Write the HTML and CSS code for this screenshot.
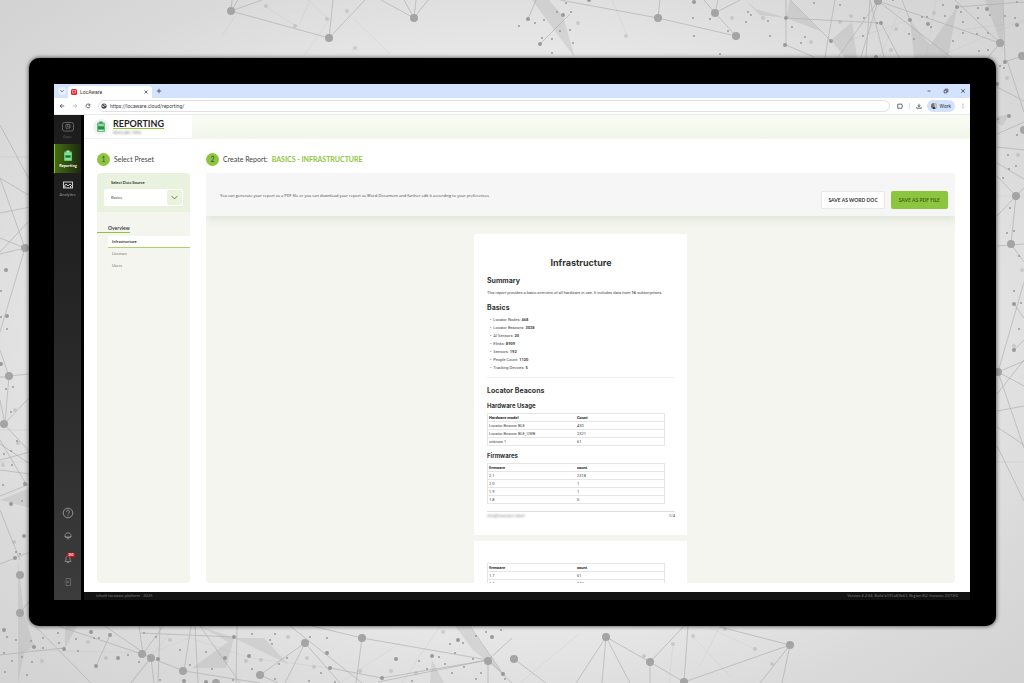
FILE: index.html
```html
<!DOCTYPE html>
<html lang="en">
<head>
    <meta charset="utf-8">
    <meta name="viewport" content="width=device-width, initial-scale=1.0">
    <title>LocAware - Reporting</title>
    <link rel="stylesheet" href="styles.css">
</head>

<body>

<!-- network pattern behind the monitor -->
<svg class="network" viewBox="0 0 1024 683" preserveAspectRatio="xMidYMid slice" aria-hidden="true">
    <g class="shapes">
        <path d="M532 0l43 58-12-42-14-16zM745 0l15 15 26 3-30-9zM790 0l-4 18 34 13zM831 40l21-18 5 36h-12zM910 20l4 38h34l9-51-27 38zM985 0h18v50z"/>
        <path d="M18 560v123l6-30 10-8-10-30zM200 626l34 12-8 30h-34l36-26zM234 638l30 0 24 26zM455 626l14 0 34 48-30-24zM432 660l-2 23h14zM65 626h12l-12 22zM0 500l30-12v20zM990 118l20-4-8 12z"/>
    </g>
    <g class="lines faint">
        <path d="M222 36l13-20M266 7l32 20 12-27M304 55l26-36M355 20l35 34M308 0l20 19M612 0l15 35M520 683l60-50M720 626l-20 40M673 645l-4 38M693 637l38 40M755 649l-45-21M0 157h30M0 430h30M0 462h30M997 196h27M997 462h27M20 650l130 3 40-15 60 20 80 10M130 683l40-50M340 683l60-40M440 626l-38 57"/>
        <path d="M900 10l-20 46M936 0l-10 57M960 30l64-8M940 56l84-36M850 40l60-20"/>
    </g>
    <g class="lines">
        <path d="M231 11l98 27 36-38M329 38l4-38M232 0l-1 11L262 0M238 0l-7 11M381 0l33 18L404 0M416 0l-2 18L428 0"/>
        <path d="M560 0l98 18 78 18-21-23L704 0M658 18l2-18M718 0l-3 13L740 0M786 0v45l28 12M786 18l95 5M790 0l41 41M835 0l-10 57M878 1l-40 56M870 0l-4 57M878 1l-17 56M870 0l14 57M881 23l18 34M878 1l122 42L955 0M878 1l74 57M1003 0l2 60M1000 43l-14 17M1022 56l-17 6M957 7l67-5M910 20l-8-20M528 19l8-19M540 44l30-30"/>
        <path d="M0 125l30 56M0 178l30 18M0 213l30-6M0 178l25 70L0 238M25 248L0 254M30 220L0 252M25 248L0 332M0 350l9 26 21-2M9 376l-4 48M0 377h9M4 424l26-27M4 424l26 28M0 400l5 24M0 460l30-8M0 496l30-12M0 440l26 44M0 510l20 50M0 564l30-12M0 470l30 4M0 444l30 20"/>
        <path d="M1007 60l17 52M997 87l27 14M997 134l27-12M997 147l27 3M997 163l27 16M997 176l19 20-19 20M1016 196l8-8M997 246l27-2M1016 196l-5 48 13 18M1024 282l-26 90 26-11M998 372l26 14M998 372l26 76M997 394l27-34M997 411l27-5M997 427l27 18M997 446l27 55M1014 350l10-10M1014 304l10 14"/>
        <path d="M20 613L30 600M35 626l56 57M58 626l84 28 9 4 33 13 76 12M105 626l46 32M139 626l4 28 20-28M151 658l-20 25M151 658l3 25M160 626l-2 57M191 626l-7 45M195 626l3 57M140 633l94 4M200 626l40 57M237 626l-1 57M290 626l72 57M305 643l-45 32 18 8M305 643l-20 40M305 643l35 40M312 626l50 12 126 22-110 22M362 638l-6 45M330 668l52 10 106-18v23M488 660l24 23M470 626l33 48M488 660l24-22M110 635l-14 31M0 655l64-7"/>
        <path d="M514 659l32 24M606 637l44 25 34 20 106-37-70-18M606 637l-30 46M606 637l-4 46M606 637l24 46M650 662l34-36M650 662v21M684 682l4-56M790 645l-30 38M790 645l-8 38"/>
    </g>
    <path class="dots pale" d="M266 6h0M295 26h0M327 19h0M347 11h0M355 48h0M578 23h0M626 36h0M732 18h0M763 18h0M840 22h0M851 16h0M896 29h0M811 42h0M934 13h0M891 50h0M693 636h0M673 644h0M644 656h0M755 649h0M772 664h0M725 629h0M106 658h0M88 642h0M42 661h0M170 640h0M246 661h0M261 660h0M288 637h0M307 658h0M314 667h0M391 671h0M416 673h0M360 671h0M443 632h0M15 410h0M18 443h0M3 465h0M14 542h0M1007 78h0M1018 155h0M1014 346h0M1022 270h0"/>
    <path class="dots tiny" d="M519 26h0M535 23h0M544 20h0M557 12h0M571 12h0M566 3h0M542 38h0M552 39h0M570 30h0M560 31h0M573 43h0M552 53h0M693 18h0M710 19h0M728 31h0M694 36h0M720 54h0M748 12h0M751 15h0M746 22h0M768 21h0M770 36h0M792 27h0M805 37h0M801 43h0M814 3h0M840 5h0M864 18h0M863 36h0M877 23h0M893 0h0M909 34h0M914 39h0M922 17h0M927 17h0M931 27h0M943 5h0M945 16h0M961 12h0M963 22h0M963 33h0M953 41h0M978 8h0M990 15h0M978 18h0M977 34h0M988 33h0M979 51h0M988 50h0M1005 16h0M1015 18h0M1017 2h0"/>
    <path class="dots tiny" d="M7 637h0M16 640h0M31 641h0M43 638h0M43 648h0M58 633h0M59 643h0M76 639h0M94 638h0M99 638h0M78 651h0M32 662h0M12 661h0M4 653h0M22 657h0M5 672h0M27 675h0M91 631h0M128 655h0M139 662h0M144 633h0M156 637h0M180 650h0M190 665h0M206 652h0M212 669h0M160 680h0M233 680h0M252 634h0M275 634h0M270 640h0M272 644h0M287 658h0M279 664h0M252 669h0M275 679h0M310 637h0M327 638h0M309 681h0M321 673h0M335 682h0M419 661h0M427 669h0M412 681h0M439 657h0M445 664h0M452 673h0M464 667h0M473 659h0M481 673h0M476 679h0M455 653h0M450 644h0M463 643h0M476 636h0M486 632h0M501 630h0M505 679h0"/>
    <path class="dots tiny" d="M1 291h0M1 317h0M7 329h0M6 389h0M13 387h0M11 412h0M17 441h0M4 454h0M11 451h0M12 465h0M3 485h0M22 501h0M16 552h0M20 554h0M1000 66h0M1004 68h0M998 119h0M1017 135h0M1008 155h0M1016 166h0M1009 169h0M1003 178h0M1010 208h0M1007 233h0M1014 231h0M1019 256h0M1014 291h0M1021 303h0M1019 329h0"/>
    <path class="dots mid" d="M528 19h0M563 15h0M540 44h0M589 0h0M694 2h0M786 18h0M831 41h0M785 45h0M881 23h0M910 20h0M928 24h0M957 7h0M987 9h0M1017 25h0M876 57h0M6 270h0M7 316h0M1 364h0M25 484h0M11 504h0M24 536h0M15 558h0M1009 116h0M1014 304h0M1014 350h0M997 84h0M1005 62h0M4 630h0M34 647h0M64 649h0M96 666h0M118 658h0M110 635h0M91 632h0M158 659h0M184 681h0M206 682h0M234 637h0M225 658h0M249 656h0M327 653h0M330 668h0M382 678h0M396 659h0M432 656h0M458 640h0M492 637h0M503 674h0"/>
    <path class="dots big" d="M231 11h0M329 38h0M414 18h0M658 18h0M715 13h0M736 36h0M878 1h0M1000 43h0M1022 56h0M25 248h0M9 376h0M4 424h0M20 575h0M1024 130h0M1016 196h0M1011 244h0M998 372h0M20 613h0M142 654h0M151 658h0M183 671h0M216 683h0M260 675h0M305 643h0M362 638h0M488 661h0M514 659h0M606 637h0M650 662h0M684 682h0M790 645h0"/>
</svg>

<div class="monitor">
<div class="browser">

    <div class="tabstrip">
        <button class="tab-search" aria-label="Search tabs"><svg viewBox="0 0 8 8"><path d="M2 3l2 2 2-2"/></svg></button>
        <div class="tab">
            <svg class="favicon" viewBox="0 0 12 12"><rect width="12" height="12" rx="3" fill="#e8202e"/><path d="M3 3h6v4.500H6L4 9V7.500H3z" fill="none" stroke="#fff"/></svg>
            <span>LocAware</span>
            <button aria-label="Close tab"><svg viewBox="0 0 8 8"><path d="M2 2l4 4M6 2l-4 4"/></svg></button>
        </div>
        <button class="new-tab" aria-label="New tab"><svg viewBox="0 0 8 8"><path d="M4 1v6M1 4h6"/></svg></button>
        <div class="window-buttons">
            <button aria-label="Minimize"><svg viewBox="0 0 8 8"><path d="M2 4h4"/></svg></button>
            <button aria-label="Restore"><svg viewBox="0 0 8 8"><path d="M1.500 3h3.500v3.500H1.500zM3 3V1.500h3.500V5H5"/></svg></button>
            <button aria-label="Close"><svg viewBox="0 0 8 8"><path d="M1.500 1.500l5 5M6.500 1.500l-5 5"/></svg></button>
        </div>
    </div>

    <div class="toolbar">
        <button aria-label="Back"><svg viewBox="0 0 8 8"><path d="M7 4H1.500M4 1.500L1.500 4 4 6.500"/></svg></button>
        <button class="disabled" aria-label="Forward"><svg viewBox="0 0 8 8"><path d="M1 4h5.500M4 1.500L6.500 4 4 6.500"/></svg></button>
        <button aria-label="Reload"><svg viewBox="0 0 8 8"><path d="M6.200 2.500A2.600 2.600 0 1 0 6.600 4.500M6.500 1v2h-2"/></svg></button>
        <div class="address">
            <svg viewBox="0 0 8 8"><circle cx="4" cy="4" r="3.500" fill="#44474c" stroke="none"/><path d="M1.200 3.800l2 .4.8 1.500M4 1.500l.5 1.500 2 .2" stroke="#fff"/></svg>
            <input type="text" aria-label="Address" value="https://locaware.cloud/reporting/">
        </div>
        <button class="ext" aria-label="Extensions"><svg viewBox="0 0 8 8"><path d="M1 1.500h5.500v1.500c1.300 0 1.300 2 0 2V7H1z"/></svg></button>
        <span class="divider"></span>
        <button aria-label="Downloads"><svg viewBox="0 0 8 8"><path d="M4 1v4M2.200 3.300L4 5l1.800-1.700M1 5.500V7h6V5.500"/></svg></button>
        <button class="profile"><svg viewBox="0 0 8 8"><circle cx="4" cy="4" r="4" fill="#6d6f73" stroke="none"/><path d="M4 0a4 4 0 0 1 0 8z" fill="#b9c6cf" stroke="none"/><path d="M3 2h2.300v2.600L4 5.400 3 4.600z" fill="#c98a6d" stroke="none"/><path d="M2.500 5.500L4 5l1.500.5V8h-3z" fill="#2b3340" stroke="none"/></svg>Work</button>
        <button aria-label="Menu"><svg viewBox="0 0 8 8"><path d="M4 1v1M4 3.500v1M4 6v1"/></svg></button>
    </div>

    <div class="app">
        <nav class="sidebar">
            <a href="#apps" class="dim">
                <svg viewBox="0 0 24 22"><rect x="1" y="2" width="22" height="17" rx="4"/><path d="M8 6h8v7h-5l-2 2v-2H8zM11 8v3M14 8v3"/></svg>
                Apps
            </a>
            <a href="#reporting" class="active">
                <svg viewBox="0 0 24 22"><rect x="4" y="2" width="16" height="19" rx="2" fill="#5fc774" stroke="none"/><path d="M9 0h6v4H9z" fill="#b7efbf" stroke="none"/><path d="M6 7h12M6 17h12" stroke="#b7efbf"/><path d="M7 12h10" stroke="#1f6a2d" stroke-width="4"/></svg>
                Reporting
            </a>
            <a href="#analytics">
                <svg viewBox="0 0 24 22"><rect x="3" y="5" width="18" height="12"/><path d="M3 15l5-6 4 4 4-4 5 5M6 17v-4M12 17v-2M17 17v-4" /></svg>
                Analytics
            </a>
            <div class="tools">
                <button aria-label="Help"><svg viewBox="0 0 20 20"><circle cx="10" cy="10" r="8"/><path d="M7.500 8c0-3.500 5-3.300 5 0 0 2-2.500 2-2.500 4M10 13.500v1.500"/></svg></button>
                <button aria-label="Support"><svg viewBox="0 0 20 20"><path d="M4 12V9c0-7 12-7 12 0v3zM4 12h3M13 12h3M8 12v2h4v-2M10 14v3"/></svg></button>
                <button aria-label="Notifications"><svg viewBox="0 0 20 20"><path d="M4 15h12l-2-3V8c0-5-8-5-8 0v4zM8 17h4"/></svg><span class="badge">350</span></button>
                <button class="faded" aria-label="Log out"><svg viewBox="0 0 20 20"><path d="M6 7V3h9v14H6v-4M3 10h8M8 7l3 3-3 3"/></svg></button>
            </div>
        </nav>

        <div class="main">
            <header>
                <div class="brand">
                    <span class="logo"><svg viewBox="0 0 24 24"><rect x="4" y="3" width="16" height="19" rx="2" fill="#5fc27b"/><path d="M9 1h6v4H9z" fill="#358f50"/><path d="M7 8h10M7 19h10" stroke="#c9f2d2" stroke-width="2"/><rect x="6" y="11" width="12" height="5" fill="#2d8a4a"/></svg></span>
                    <div>
                        <h1>REPORTING</h1>
                        <p class="smudge">INSOLAR: 7890</p>
                    </div>
                </div>
            </header>

            <div class="columns">
                <section class="preset">
                    <h2><span class="step">1</span>Select Preset</h2>
                    <div class="panel">
                        <div class="source">
                            <label for="source">Select Data Source</label>
                            <div class="select">
                                <select id="source"><option>Basics</option></select>
                                <svg viewBox="0 0 16 16"><path d="M5 6.500l3 3 3-3"/></svg>
                            </div>
                        </div>
                        <h3>Overview</h3>
                        <ul>
                            <li><a href="#infrastructure" class="current">Infrastructure</a></li>
                            <li><a href="#licenses">Licenses</a></li>
                            <li><a href="#users">Users</a></li>
                        </ul>
                    </div>
                </section>

                <section class="create">
                    <h2><span class="step">2</span>Create Report: <b>BASICS - INFRASTRUCTURE</b></h2>
                    <div class="panel">
                        <div class="actions">
                            <p>You can generate your report as a PDF file or you can download your report as Word-Document and further edit it according to your preferences</p>
                            <button class="word">SAVE AS WORD DOC</button>
                            <button class="pdf">SAVE AS PDF FILE</button>
                        </div>
                        <div class="preview">
                            <article class="sheet">
                                <h4 class="title">Infrastructure</h4>
                                <h4>Summary</h4>
                                <p class="intro">This report provides a basic overview of all hardware in use. It includes data from <b>16</b> subscriptions.</p>
                                <h4>Basics</h4>
                                <ul>
                                    <li>Locator Nodes: <b>468</b></li>
                                    <li>Locator Beacons: <b>3028</b></li>
                                    <li>AI Sensors: <b>20</b></li>
                                    <li>Elinks: <b>8909</b></li>
                                    <li>Sensors: <b>192</b></li>
                                    <li>People Count: <b>1120</b></li>
                                    <li>Tracking Devices: <b>5</b></li>
                                </ul>
                                <hr>
                                <h4>Locator Beacons</h4>
                                <h5>Hardware Usage</h5>
                                <table>
                                    <tr><th>Hardware model</th><th>Count</th></tr>
                                    <tr><td>Locator Beacon BLE</td><td>430</td></tr>
                                    <tr><td>Locator Beacon BLE, UWB</td><td>2321</td></tr>
                                    <tr><td>unknow 1</td><td>61</td></tr>
                                </table>
                                <h5>Firmwares</h5>
                                <table>
                                    <tr><th>firmware</th><th>count</th></tr>
                                    <tr><td>2.1</td><td>2318</td></tr>
                                    <tr><td>2.0</td><td>1</td></tr>
                                    <tr><td>1.9</td><td>1</td></tr>
                                    <tr><td>1.8</td><td>5</td></tr>
                                </table>
                                <div class="sheet-footer"><span class="smudge">info@locaware.cloud</span><span>1/4</span></div>
                            </article>
                            <article class="sheet next">
                                <table>
                                    <tr><th>firmware</th><th>count</th></tr>
                                    <tr><td>1.7</td><td>61</td></tr>
                                    <tr><td>1.5</td><td>242</td></tr>
                                </table>
                            </article>
                        </div>
                    </div>
                </section>
            </div>

            <footer>
                <span>infsoft locaware.platform - 2025</span>
                <span>Version 4.2.64, Build b193a83b43, Region EU, Instance 0373f0</span>
            </footer>
        </div>
    </div>

</div>
</div>

</body>
</html>
```
FILE: styles.css
```css
* {
    box-sizing: border-box;
}

body {
    margin: 0;
    height: 100vh;
    padding: 58px 28px 57px 29px;
    font-family: Lato, "Open Sans", sans-serif;
    font-size: 4px;
    color: #444;
    background: radial-gradient(ellipse at 50% 50%, #f4f4f4 0%, #ededed 50%, #dadada 80%, #d2d2d2 100%);
    overflow: hidden;
}

h1, h2, h3, h4, h5, p, ul {
    margin: 0;
    padding: 0;
    list-style: none;
}

a {
    color: inherit;
    text-decoration: none;
}

button {
    display: flex;
    align-items: center;
    justify-content: center;
    padding: 0;
    border: none;
    background: none;
    font: inherit;
    color: inherit;
    cursor: pointer;
}

svg {
    display: block;
    flex: none;
}

/* background */
.network {
    position: absolute;
    z-index: -1;
    top: 0;
    left: 0;
    width: 100%;
    height: 100%;
}
.shapes { fill: #999; opacity: .22; }
.lines { fill: none; stroke: #a9a9a9; stroke-width: .8; opacity: .75; }
.faint { opacity: .2; }
.dots { fill: none; stroke: #a4a4a4; stroke-linecap: round; }
.pale { stroke-width: 4; opacity: .4; }
.tiny { stroke-width: 2; stroke: #999; }
.mid { stroke-width: 4; stroke: #999; }
.big { stroke-width: 8; }

/* monitor + browser */
.monitor {
    height: 100%;
    padding: 26px 26px 26px 25px;
    border-radius: 10px;
    background: #000;
    box-shadow: 0 0 4px #333;
}

.browser {
    display: flex;
    flex-direction: column;
    height: 100%;
    overflow: hidden;
}

.tabstrip, .toolbar {
    display: flex;
    align-items: center;
    flex: none;
    font-family: Roboto, sans-serif;
    font-size: 5px;
    color: #333;
}
.tabstrip svg, .toolbar svg {
    width: 6px;
    height: 6px;
    fill: none;
    stroke: #3c3f44;
    stroke-width: 1;
}

.tabstrip {
    height: 14px;
    padding: 0 4px;
    background: #d3e3fd;
}
.tab-search {
    width: 8px;
    height: 8px;
    border-radius: 3px;
    background: #e6effe;
}
.tab {
    display: flex;
    align-items: center;
    gap: 3px;
    align-self: flex-end;
    width: 84px;
    height: 12px;
    margin-left: 2px;
    padding: 0 3px;
    border-radius: 4px 4px 0 0;
    background: #fff;
}
.tab button { margin-left: auto; }
.tab svg.favicon { stroke: none; }
.new-tab { margin-left: 4px; }
.window-buttons {
    display: flex;
    gap: 11px;
    margin-left: auto;
}

.toolbar {
    height: 17px;
    padding: 0 4px 0 5px;
    gap: 7px;
    background: #fff;
    border-bottom: 1px solid #e8eaed;
}
.disabled { opacity: .4; }
.address {
    display: flex;
    align-items: center;
    flex: 1;
    height: 12px;
    padding: 0 2px;
    gap: 3px;
    border: 1px solid #dfe1e6;
    border-radius: 6px;
}
.address input {
    flex: 1;
    padding: 0;
    border: none;
    outline: none;
    font: inherit;
    color: #444;
}
.divider {
    width: 1px;
    height: 6px;
    margin: 0 -1px;
    background: #d3e3fd;
}
.profile {
    gap: 3px;
    height: 12px;
    padding: 0 4px;
    margin: 0 -2px;
    border-radius: 6px;
    background: #d3e3fd;
}

/* app */
.app {
    display: flex;
    flex: 1;
    min-height: 0;
    gap: 3px;
}

.sidebar {
    display: flex;
    flex-direction: column;
    width: 27px;
    background: linear-gradient(#1c1c1c, #222 30%, #3c3c3c);
    color: #999;
}
.sidebar a {
    display: flex;
    flex-direction: column;
    align-items: center;
    justify-content: center;
    gap: 1px;
    height: 29px;
    line-height: 5px;
}
.sidebar svg {
    width: 12px;
    height: 12px;
    fill: none;
    stroke: #ccc;
    stroke-width: 2;
}
.sidebar .dim { opacity: .4; }
.sidebar .faded { opacity: .6; }
.sidebar a.active {
    border-left: 1px solid #8cc63f;
    background: linear-gradient(to right, #456d12, #1d2a10);
    color: #fff;
    font-weight: bold;
}
.tools {
    display: flex;
    flex-direction: column;
    align-items: center;
    gap: 11px;
    margin-top: auto;
    padding-bottom: 12px;
}
.tools button {
    position: relative;
    height: 12px;
}
.tools svg {
    height: 10px;
    stroke-width: 1;
}
.tools button:first-child svg { height: 12px; }
.badge {
    position: absolute;
    top: 0;
    right: -1px;
    padding: 0 1px;
    border-radius: 1px;
    background: #e30613;
    color: #fff;
    font-size: 3px;
    font-weight: bold;
    line-height: 4px;
}

.main {
    display: flex;
    flex-direction: column;
    flex: 1;
    min-width: 0;
    background: #fff;
}

header {
    height: 24px;
    flex: none;
    background: linear-gradient(to bottom, #f9fcf4, #f2f6ea);
}
.brand {
    display: flex;
    align-items: center;
    gap: 4px;
    width: 108px;
    height: 100%;
    padding-left: 9px;
    background: #fff;
    border-bottom: 1px solid #f0f0f0;
}
.logo {
    display: flex;
    align-items: center;
    justify-content: center;
    width: 16px;
    height: 16px;
    border-radius: 50%;
    background: #f0f1f0;
}
.logo svg {
    width: 12px;
    height: 12px;
    fill: none;
}
h1 {
    width: fit-content;
    font-size: 9px;
    font-weight: bold;
    line-height: 9px;
    color: #222;
    border-bottom: 1px solid #8cc63f;
}
.smudge {
    filter: blur(1px);
    color: #777;
}
.brand p {
    margin-top: 2px;
    line-height: 4px;
}

.columns {
    display: flex;
    flex: 1;
    min-height: 0;
    gap: 16px;
    padding: 14px 15px 9px 13px;
}
.columns section {
    display: flex;
    flex-direction: column;
}
h2 {
    display: flex;
    align-items: center;
    gap: 4px;
    height: 12px;
    margin-bottom: 8px;
    font-size: 7px;
    font-weight: normal;
}
h2 b { color: #8cc63f; }
.step {
    width: 13px;
    height: 13px;
    border-radius: 50%;
    background: #8cc63f;
    text-align: center;
    line-height: 13px;
}
.panel {
    display: flex;
    flex-direction: column;
    flex: 1;
    min-height: 0;
    border-radius: 4px;
    background: #f3f5ee;
    overflow: hidden;
}

.preset { width: 93px; }
.source {
    height: 39px;
    padding: 7px 7px 0;
    background: #e9f2de;
}
.source label {
    display: block;
    padding-left: 7px;
    font-weight: bold;
    line-height: 5px;
    color: #333;
}
.select {
    position: relative;
    margin-top: 4px;
}
.select select {
    appearance: none;
    display: block;
    width: 100%;
    height: 17px;
    padding: 0 7px;
    border: none;
    border-radius: 2px;
    background: #fff;
    font: inherit;
    color: #444;
}
.select svg {
    position: absolute;
    top: 1px;
    right: 1px;
    width: 15px;
    height: 15px;
    border-radius: 2px;
    background: #eaf3dc;
    fill: none;
    stroke: #5d7a35;
    pointer-events: none;
}
h3 {
    width: 33px;
    margin: 12px 0 3px;
    padding-left: 11px;
    border-bottom: 1px solid #8cc63f;
    font-size: 5px;
    line-height: 8px;
}
.preset li a {
    display: block;
    margin-left: 11px;
    padding-left: 4px;
    line-height: 12px;
    color: #777;
}
.preset li a.current {
    border-bottom: 1px solid #a9d36c;
    background: #fff;
    font-weight: bold;
    line-height: 11px;
    color: #333;
}

.create {
    flex: 1;
    min-width: 0;
}
.actions {
    display: flex;
    align-items: center;
    flex: none;
    gap: 6px;
    height: 43px;
    padding: 10px 7px 0 14px;
    background: #f6f6f6;
    box-shadow: 0 2px 8px #dadfd2;
}
.actions p {
    flex: 1;
    padding-bottom: 9px;
    font-family: "Open Sans", sans-serif;
}
.actions button {
    height: 18px;
    padding: 0 8px;
    border-radius: 2px;
    font-size: 5px;
    font-weight: bold;
    color: #333;
}
.actions .word {
    padding: 0 6px;
    background: #fff;
    border: 1px solid #e8e8e8;
}
.actions .pdf {
    background: #8cc63f;
    color: #3f6412;
}

/* report sheets */
.preview {
    flex: 1;
    min-height: 0;
    padding-top: 18px;
    overflow: auto;
    scrollbar-width: none;
}
.sheet {
    width: 213px;
    min-height: 301px;
    margin: 0 auto 6px;
    padding: 24px 12px 15px 13px;
    background: #fff;
    font-family: Roboto, sans-serif;
    line-height: 8px;
}
.sheet.next { padding-top: 22px; }
.sheet h4, .sheet h5 {
    font-family: Inter, sans-serif;
    font-size: 7px;
    line-height: 10px;
    color: #333;
}
.sheet h4.title {
    margin-bottom: 8px;
    font-size: 9px;
    text-align: center;
}
.sheet h5 {
    margin: 5px 0 3px;
    font-size: 6px;
    line-height: 9px;
}
.intro { margin: 3px 0 6px; }
.sheet ul { margin-top: 3px; }
.sheet li { padding-left: 3px; }
.sheet li::before { content: "•"; margin-right: 2px; }
.sheet hr {
    height: 1px;
    margin: 5px 0 8px;
    border: none;
    background: #f0f0f0;
}
.sheet table {
    width: 178px;
    table-layout: fixed;
    border-collapse: collapse;
    border: 1px solid #e6e6e6;
}
.sheet tr { border-bottom: 1px solid #e6e6e6; }
.sheet th, .sheet td {
    padding: 0 1px;
    text-align: left;
    line-height: 7px;
}
.sheet th { color: #222; }
.sheet-footer {
    display: flex;
    justify-content: space-between;
    margin-top: 7px;
    border-top: 1px solid #ddd;
    line-height: 7px;
}

footer {
    display: flex;
    justify-content: space-between;
    flex: none;
    height: 8px;
    padding: 0 12px;
    background: #121212;
    color: #777;
    line-height: 8px;
}
```
